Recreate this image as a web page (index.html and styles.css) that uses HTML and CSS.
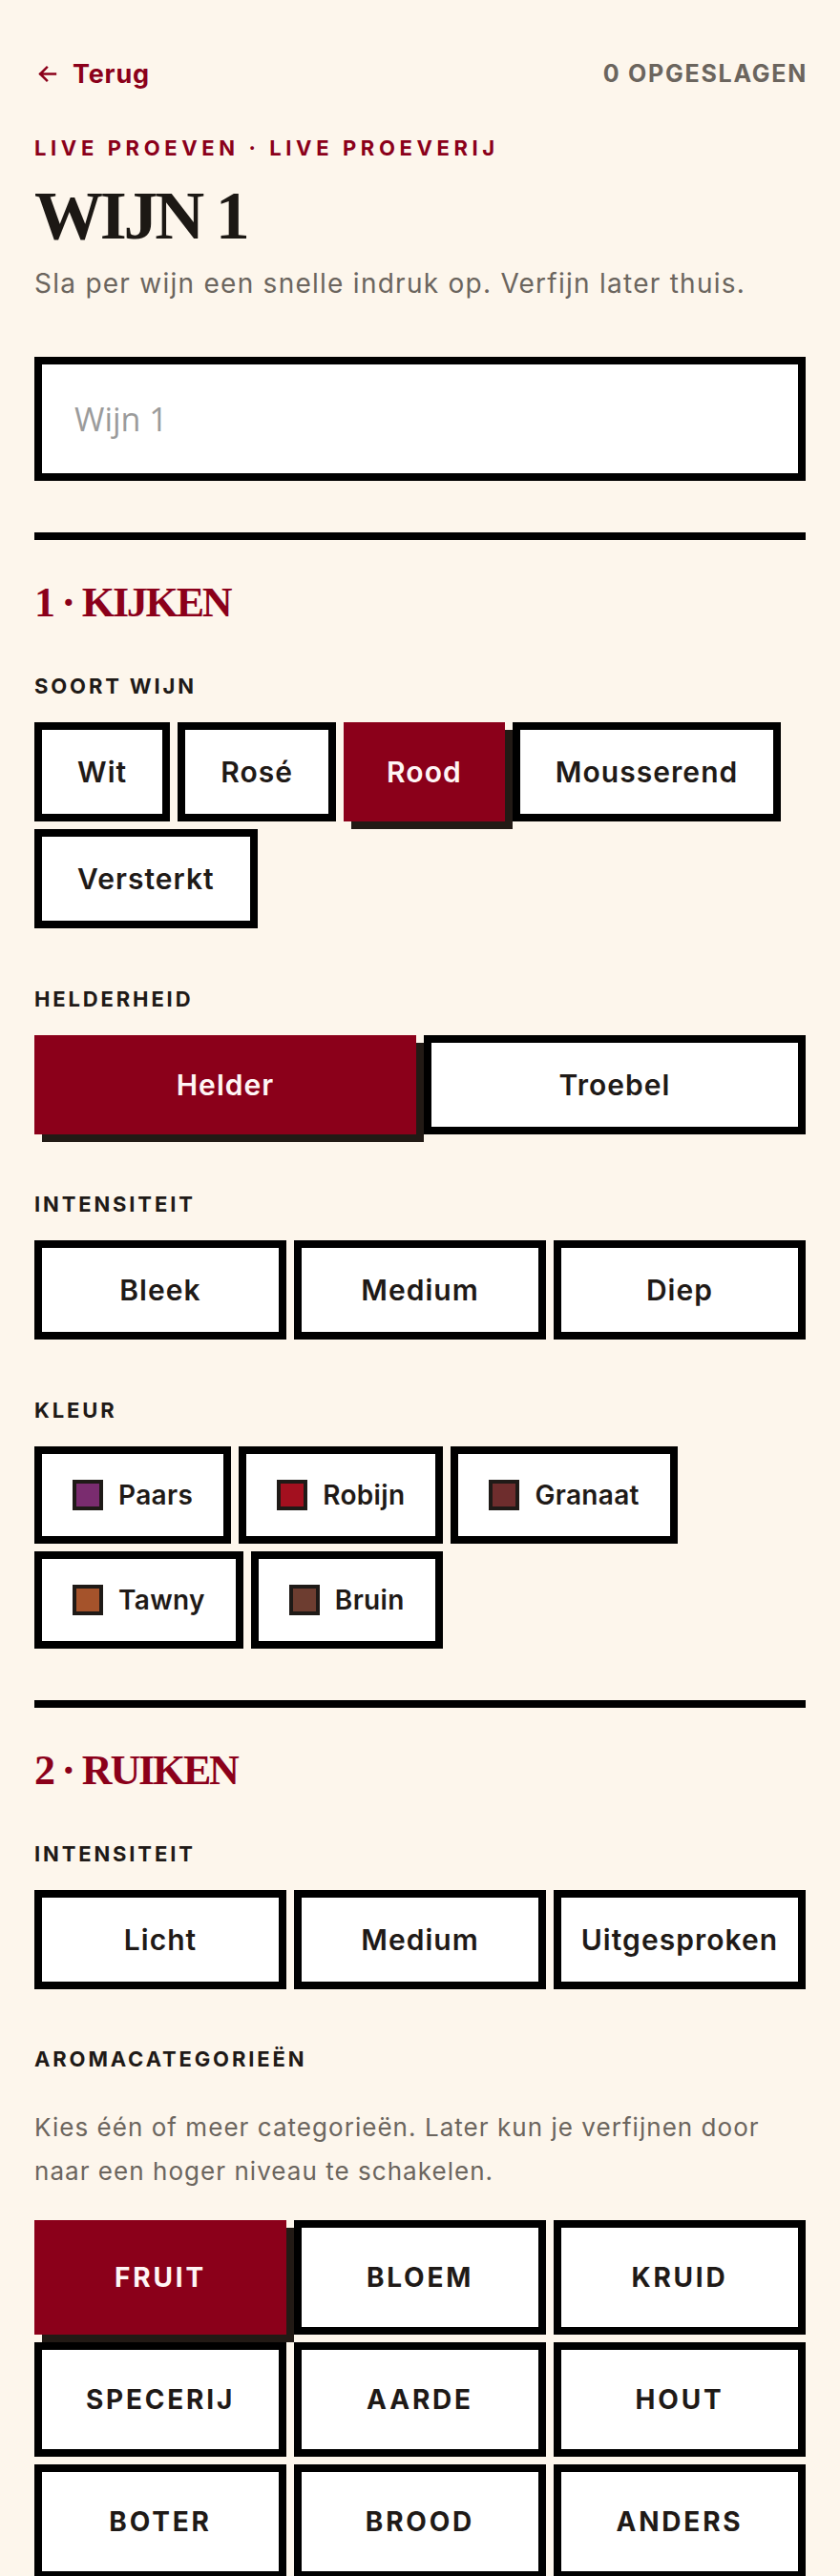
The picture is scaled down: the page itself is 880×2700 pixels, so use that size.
FILE: index.html
```html
<!DOCTYPE html>
<html lang="nl">
<head>
<meta charset="utf-8">
<title>Wijn 1 · Live proeverij</title>
<link rel="stylesheet" href="styles.css">
</head>
<body>
<main class="page">
  <header class="topbar">
    <a class="back" href="#">
      <svg class="back-icon" viewBox="0 0 20 20" width="20" height="20" aria-hidden="true">
        <path d="M18 10H3M9.5 3.5L3 10l6.5 6.5" fill="none" stroke="currentColor" stroke-width="2.4" stroke-linecap="square" stroke-linejoin="miter"/>
      </svg>
      <span>Terug</span>
    </a>
    <span class="saved">0 OPGESLAGEN</span>
  </header>

  <p class="eyebrow">LIVE PROEVEN · LIVE PROEVERIJ</p>
  <h1 class="title">WIJN 1</h1>
  <p class="lead">Sla per wijn een snelle indruk op. Verfijn later thuis.</p>

  <input class="name-input" type="text" placeholder="Wijn 1">

  <section class="section">
    <h2 class="section-title">1 · KIJKEN</h2>

    <div class="field">
      <div class="label">SOORT WIJN</div>
      <div class="options wrap">
        <button class="opt">Wit</button>
        <button class="opt">Rosé</button>
        <button class="opt is-on">Rood</button>
        <button class="opt">Mousserend</button>
        <button class="opt">Versterkt</button>
      </div>
    </div>

    <div class="field">
      <div class="label">HELDERHEID</div>
      <div class="options cols-2">
        <button class="opt is-on">Helder</button>
        <button class="opt">Troebel</button>
      </div>
    </div>

    <div class="field">
      <div class="label">INTENSITEIT</div>
      <div class="options cols-3">
        <button class="opt">Bleek</button>
        <button class="opt">Medium</button>
        <button class="opt">Diep</button>
      </div>
    </div>

    <div class="field">
      <div class="label">KLEUR</div>
      <div class="options wrap">
        <button class="chip"><span class="swatch sw-paars"></span>Paars</button>
        <button class="chip"><span class="swatch sw-robijn"></span>Robijn</button>
        <button class="chip"><span class="swatch sw-granaat"></span>Granaat</button>
        <button class="chip"><span class="swatch sw-tawny"></span>Tawny</button>
        <button class="chip"><span class="swatch sw-bruin"></span>Bruin</button>
      </div>
    </div>
  </section>

  <section class="section">
    <h2 class="section-title">2 · RUIKEN</h2>

    <div class="field">
      <div class="label">INTENSITEIT</div>
      <div class="options cols-3">
        <button class="opt">Licht</button>
        <button class="opt">Medium</button>
        <button class="opt tight">Uitgesproken</button>
      </div>
    </div>

    <div class="field">
      <div class="label">AROMACATEGORIEËN</div>
      <p class="help">Kies één of meer categorieën. Later kun je verfijnen door naar een hoger niveau te schakelen.</p>
      <div class="options cols-3 aroma">
        <button class="cat is-on">FRUIT</button>
        <button class="cat">BLOEM</button>
        <button class="cat">KRUID</button>
        <button class="cat">SPECERIJ</button>
        <button class="cat">AARDE</button>
        <button class="cat">HOUT</button>
        <button class="cat">BOTER</button>
        <button class="cat">BROOD</button>
        <button class="cat">ANDERS</button>
      </div>
    </div>
  </section>
</main>
</body>
</html>
```

FILE: styles.css
```css
* { box-sizing: border-box; }

html, body {
  margin: 0;
  padding: 0;
  background: #fdf6ec;
}

body {
  font-family: Inter, "Noto Sans", "DejaVu Sans", sans-serif;
  color: #1f1a17;
}

.page {
  padding: 57px 36px 0;
}

/* Top bar */
.topbar {
  display: flex;
  justify-content: space-between;
  align-items: center;
  height: 40px;
}

.back {
  display: flex;
  align-items: center;
  gap: 16px;
  color: #8b001a;
  text-decoration: none;
  font-size: 27px;
  font-weight: 700;
  letter-spacing: 0.03em;
  padding-left: 3px;
}

.back-icon { width: 21px; height: 21px; }

.saved {
  color: #6b655e;
  font-size: 25px;
  font-weight: 700;
  letter-spacing: 0.07em;
  margin-right: -2px;
}

/* Heading */
.eyebrow {
  margin: 44px 0 0;
  color: #8b001a;
  font-size: 22px;
  line-height: 28px;
  font-weight: 700;
  letter-spacing: 0.21em;
}

.title {
  margin: 21px 0 0;
  font-family: "Liberation Serif", "DejaVu Serif", serif;
  font-weight: 700;
  font-size: 72px;
  line-height: 72px;
  letter-spacing: -0.045em;
  color: #1c1814;
}

.lead {
  margin: 17px 0 0;
  font-size: 28px;
  line-height: 36px;
  font-weight: 400;
  letter-spacing: 0.045em;
  color: #6b655e;
}

/* Name input */
.name-input {
  display: block;
  width: 100%;
  height: 130px;
  margin-top: 59px;
  border: 8px solid #000;
  border-radius: 0;
  background: #fff;
  padding: 0 34px;
  font-family: "Open Sans", "Noto Sans", sans-serif;
  font-size: 34px;
  color: #1f1a17;
  outline: none;
}

.name-input::placeholder { color: #9b9b9b; }

/* Sections */
.section {
  border-top: 8px solid #000;
  margin-top: 54px;
}

.section-title {
  margin: 42px 0 0;
  font-family: "Liberation Serif", "DejaVu Serif", serif;
  font-weight: 700;
  font-size: 44px;
  line-height: 48px;
  letter-spacing: -0.05em;
  color: #8b001a;
}

.field { margin-top: 59.5px; }
.section-title + .field { margin-top: 49px; }

.label {
  font-size: 22px;
  line-height: 28px;
  font-weight: 700;
  letter-spacing: 0.13em;
  color: #1f1a17;
}

.options {
  margin-top: 24px;
  gap: 8px;
}

.options.wrap {
  display: flex;
  flex-wrap: wrap;
}

.options.cols-2 {
  display: grid;
  grid-template-columns: 1fr 1fr;
}

.options.cols-3 {
  display: grid;
  grid-template-columns: 1fr 1fr 1fr;
}

/* Option buttons */
.opt, .chip, .cat {
  font-family: inherit;
  background: #fff;
  border: 8px solid #000;
  border-radius: 0;
  color: #1f1a17;
  margin: 0;
  cursor: pointer;
}

.opt {
  height: 104px;
  padding: 0 37px;
  font-size: 30px;
  font-weight: 600;
  letter-spacing: 0.035em;
}

.opt.tight { padding: 0 8px; }

.chip {
  height: 102px;
  padding: 0 32px;
  display: flex;
  align-items: center;
  gap: 16px;
  font-size: 28px;
  font-weight: 600;
  letter-spacing: 0.012em;
}

.swatch {
  width: 32px;
  height: 32px;
  border: 4px solid #1f1a17;
  flex: none;
}

.sw-paars { background: #7a2c6f; }
.sw-robijn { background: #a3101f; }
.sw-granaat { background: #6e2d2d; }
.sw-tawny { background: #a5532b; }
.sw-bruin { background: #6d3d30; }

.help {
  margin: 35px 0 0;
  font-size: 26px;
  line-height: 46px;
  letter-spacing: 0.04em;
  color: #6b655e;
}

.options.aroma { margin-top: 28px; }

.cat {
  height: 120px;
  padding: 0 8px;
  font-size: 28px;
  font-weight: 700;
  letter-spacing: 0.1em;
}

.is-on {
  background: #8b001a;
  border-color: #8b001a;
  color: #fff5f5;
  box-shadow: 8px 8px 0 #221a15;
  position: relative;
}
```
